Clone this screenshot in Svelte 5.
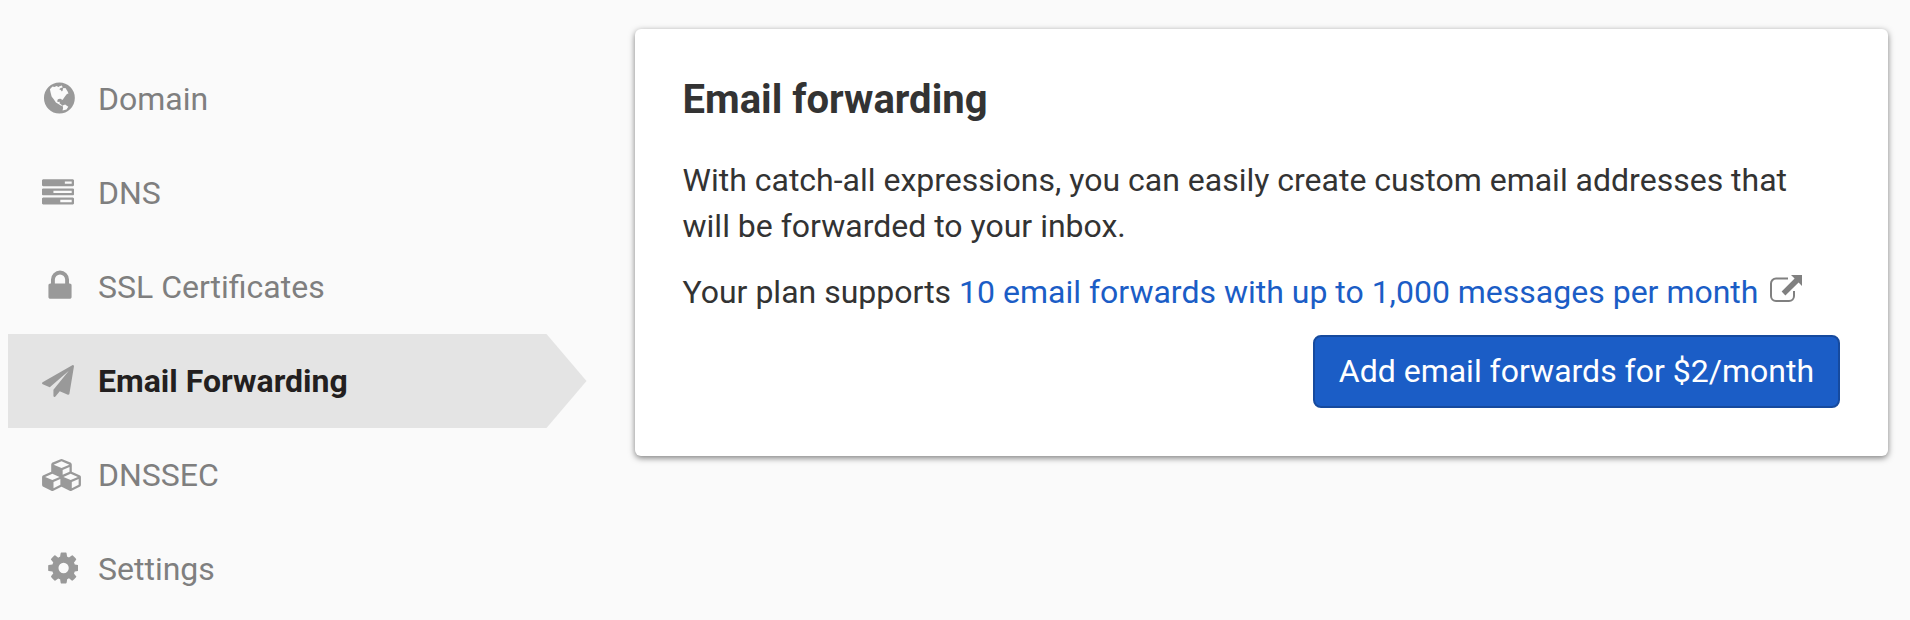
<script lang="ts">
	const items = [
		{
			label: 'Domain',
			size: 'md',
			viewBox: '30 0 1792 1792',
			path: 'M896 128a768 768 0 1 0 0 1536a768 768 0 1 0 0-1536zM425 458L480 400L557 326L650 345L755 300L850 350L900 310L1019 277L1060 376L960 400L887 458L960 500L1019 574L1060 520L1070 440L1102 392L1217 409L1250 480L1300 557L1349 673L1270 700L1201 788L1102 920L1080 960L1019 1010L1000 940L920 937L820 960L788 1040L810 1101L920 1080L900 1160L986 1217L1052 1290L960 1270L887 1217L722 1118L623 970L508 821L458 623zM1052 1266L1184 1217L1250 1270L1340 1332L1250 1464L1052 1514L1080 1390z'
		},
		{
			label: 'DNS',
			size: 'sm',
			viewBox: '0 0 1792 1792',
			path: 'M1024 1408h640v-128h-640v128zm-384-512h1024v-128h-1024v128zm640-512h384v-128h-384v128zm512 832v256q0 26-19 45t-45 19h-1664q-26 0-45-19t-19-45v-256q0-26 19-45t45-19h1664q26 0 45 19t19 45zm0-512v256q0 26-19 45t-45 19h-1664q-26 0-45-19t-19-45v-256q0-26 19-45t45-19h1664q26 0 45 19t19 45zm0-512v256q0 26-19 45t-45 19h-1664q-26 0-45-19t-19-45v-256q0-26 19-45t45-19h1664q26 0 45 19t19 45z'
		},
		{
			label: 'SSL Certificates',
			size: 'md',
			viewBox: '0 0 1792 1792',
			path: 'M640 768h512v-192q0-106-75-181t-181-75-181 75-75 181v192zm832 96v576q0 40-28 68t-68 28h-960q-40 0-68-28t-28-68v-576q0-40 28-68t68-28h32v-192q0-184 132-316t316-132 316 132 132 316v192h32q40 0 68 28t28 68z'
		},
		{
			label: 'Email Forwarding',
			size: 'sm',
			active: true,
			viewBox: '0 0 1792 1792',
			path: 'M1764 11q33 24 27 64l-256 1536q-5 29-32 45-14 8-31 8-11 0-24-5l-453-185-242 295q-18 23-49 23-13 0-22-4-19-7-30.5-23.5t-11.5-36.5v-349l864-1059-1069 925-395-162q-37-14-40-55-2-40 32-59l1664-960q15-9 32-9 20 0 36 11z'
		},
		{
			label: 'DNSSEC',
			size: 'lg',
			viewBox: '0 0 2176 1792',
			path: 'M640 1632l384-192v-314l-384 164v342zm-64-454l404-173-404-173-404 173zm1088 454l384-192v-314l-384 164v342zm-64-454l404-173-404-173-404 173zm-448-293l384-165v-266l-384 164v267zm-64-379l441-189-441-189-441 189zm1088 518v416q0 36-19 67t-52 47l-448 224q-25 14-57 14t-57-14l-448-224q-4-2-7-4-2 2-7 4l-448 224q-25 14-57 14t-57-14l-448-224q-33-16-52-47t-19-67v-416q0-38 21.5-70t56.5-48l434-186v-400q0-38 21.5-70t56.5-48l448-192q23-10 50-10t50 10l448 192q35 16 56.5 48t21.5 70v400l434 186q36 16 57 48t21 70z'
		},
		{
			label: 'Settings',
			size: 'md',
			viewBox: '-180 0 1792 1792',
			path: 'M1152 896q0-106-75-181t-181-75-181 75-75 181 75 181 181 75 181-75 75-181zm512-109v222q0 12-8 23t-20 13l-185 28q-19 54-39 91 35 50 107 138 10 12 10 25t-9 23q-27 37-99 108t-94 71q-12 0-26-9l-138-108q-44 23-91 38-16 136-29 186-7 28-36 28h-222q-14 0-24.5-8.5t-11.5-21.5l-28-184q-49-16-90-37l-141 107q-10 9-25 9-14 0-25-11-126-114-165-168-7-10-7-23 0-12 8-23 15-21 51-66.5t54-70.5q-27-50-41-99l-183-27q-13-2-21-12.5t-8-23.5v-222q0-12 8-23t19-13l186-28q14-46 39-92-40-57-107-138-10-12-10-24 0-10 9-23 26-36 98.5-107.5t94.5-71.5q13 0 26 10l138 107q44-23 91-38 16-136 29-186 7-28 36-28h222q14 0 24.5 8.5t11.5 21.5l28 184q49 16 90 37l142-107q9-9 24-9 13 0 25 10 129 119 165 170 7 8 7 22 0 12-8 23-15 21-51 66.5t-54 70.5q26 50 41 98l183 28q13 2 21 12.5t8 23.5z'
		}
	];
</script>

<div class="page">
	<nav class="sidebar" aria-label="Domain settings">
		<ul>
			{#each items as item}
				<li>
					<a
						href="#{item.label.toLowerCase().replace(' ', '-')}"
						class:active={item.active}
						aria-current={item.active ? 'page' : undefined}
					>
						<svg class="icon {item.size}" viewBox={item.viewBox} aria-hidden="true">
							<path d={item.path} />
						</svg>
						<span>{item.label}</span>
					</a>
				</li>
			{/each}
		</ul>
	</nav>

	<main class="card">
		<h1>Email forwarding</h1>
		<p>
			With catch-all expressions, you can easily create custom email addresses that will be
			forwarded to your inbox.
		</p>
		<p>
			Your plan supports
			<a href="#plans"
				>10 email forwards with up to 1,000 messages per month<svg
					class="external"
					viewBox="0 0 32 28"
					aria-hidden="true"
				>
					<path class="box" d="M18 3.5H6a5 5 0 0 0-5 5V21a5 5 0 0 0 5 5h13a5 5 0 0 0 5-5v-5" />
					<path class="arrow" d="M21 0h11v11l-3.4-3.4L15.4 20.4l-3.8-3.8L24.6 3.6z" />
				</svg></a
			>
		</p>
		<div class="actions">
			<button type="button">Add email forwards for $2/month</button>
		</div>
	</main>
</div>

<style>
	:global(body) {
		margin: 0;
		background: #fafafa;
		color: #333;
		font-family: Roboto, 'Liberation Sans', sans-serif;
		font-size: 32px;
		line-height: 46px;
	}
	.page {
		display: grid;
		grid-template-columns: 6fr 13fr;
		gap: 48px;
		align-items: start;
		padding: 0 22px 0 8px;
	}
	.sidebar ul {
		list-style: none;
		margin: 0;
		padding: 52px 0 0;
	}
	.sidebar a {
		display: flex;
		align-items: center;
		height: 94px;
		padding-left: 34px;
		box-sizing: border-box;
		color: #7f7f7f;
		text-decoration: none;
	}
	.sidebar a.active {
		background: #e4e4e4;
		clip-path: polygon(0 0, calc(100% - 40px) 0, 100% 50%, calc(100% - 40px) 100%, 0 100%);
		color: #231f20;
		font-weight: bold;
	}
	.sidebar span {
		flex: 1;
	}
	.icon {
		flex: none;
		fill: #999;
		fill-rule: evenodd;
		height: 32px;
	}
	.icon.sm {
		width: 32px;
		margin-right: 24px;
	}
	.icon.md {
		width: 36px;
		height: 36px;
		margin-right: 20px;
		margin-bottom: 2px;
	}
	.icon.lg {
		width: 39px;
		margin-right: 17px;
	}
	.card {
		margin-top: 29px;
		padding: 48px;
		background: #fff;
		border-radius: 6px;
		box-shadow: 0 2px 6px rgba(0, 0, 0, 0.5);
	}
	h1 {
		margin: 0 0 34px;
		font-size: 40px;
		line-height: 46px;
	}
	p {
		margin: 0 0 20px;
	}
	p a {
		color: #1b5dc6;
		text-decoration: none;
	}
	.external {
		width: 32px;
		height: 28px;
		margin-left: 12px;
	}
	.external .box {
		fill: none;
		stroke: #808080;
		stroke-width: 2;
	}
	.external .arrow {
		fill: #808080;
	}
	.actions {
		display: flex;
		justify-content: flex-end;
	}
	button {
		padding: 11px 24px 12px;
		border: 2px solid #164a9e;
		border-radius: 8px;
		background: #1b5dc6;
		color: #fff;
		font: inherit;
	}
</style>
